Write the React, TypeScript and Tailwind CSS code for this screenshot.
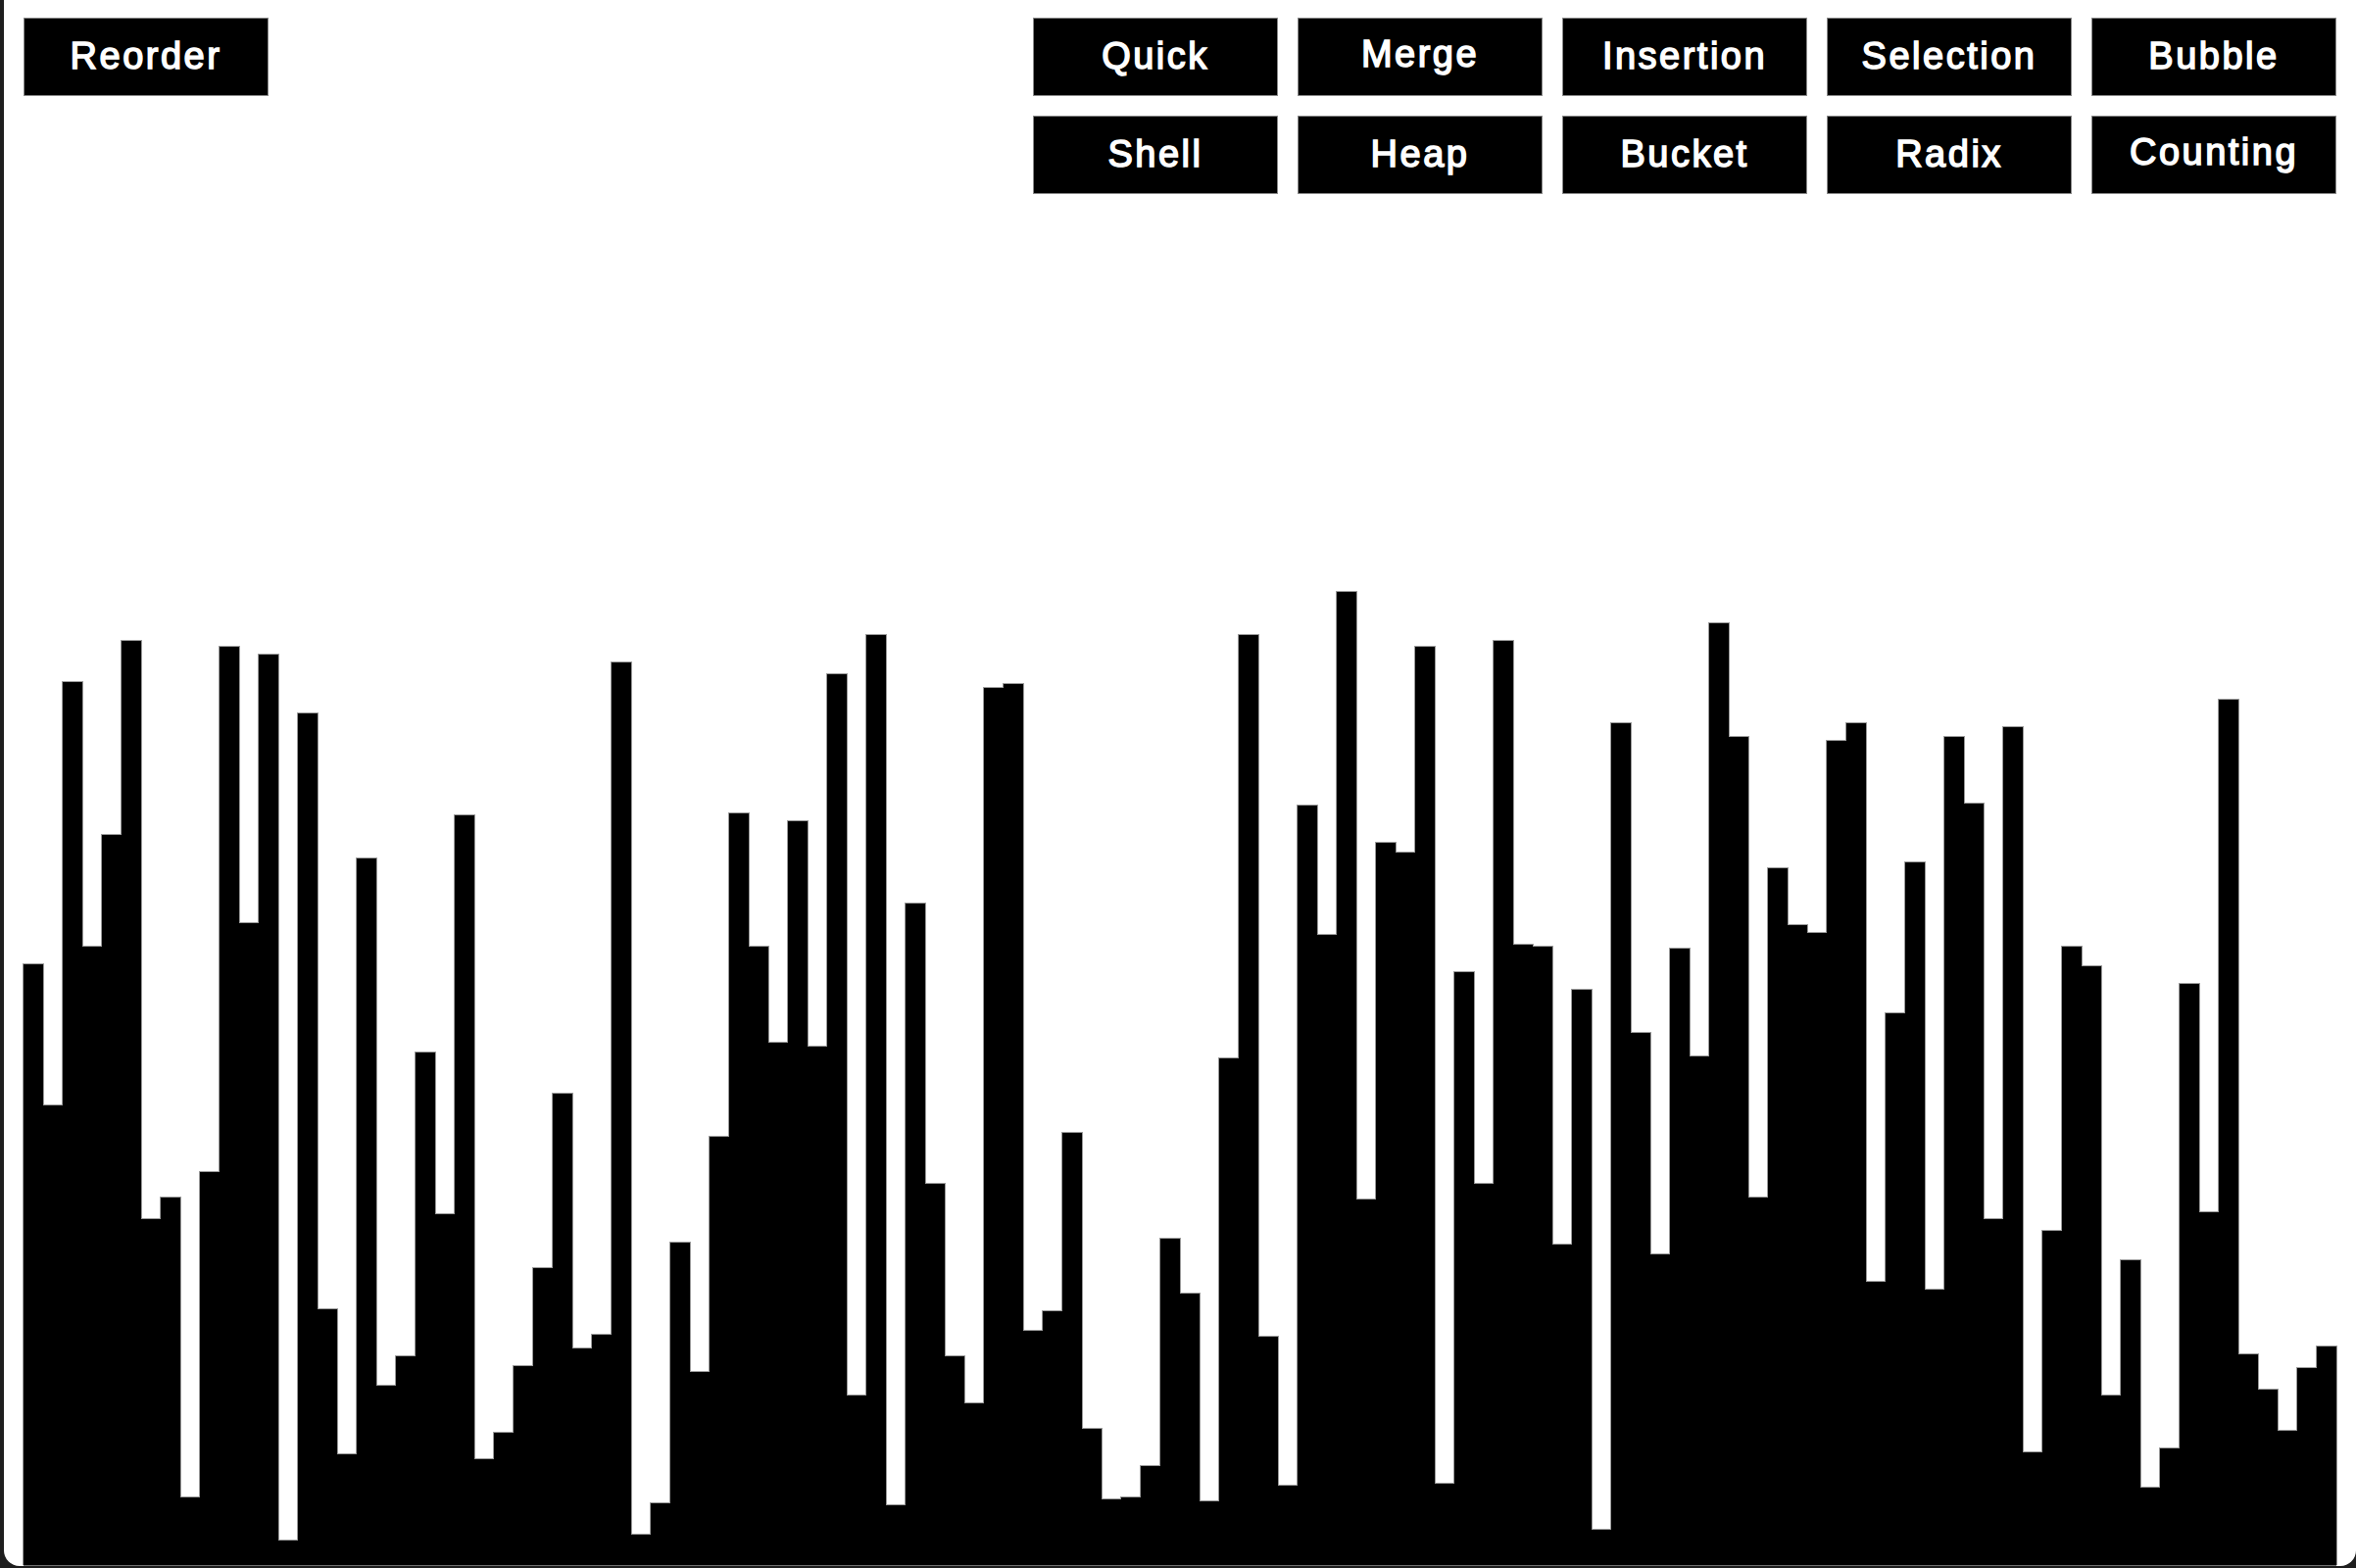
const tops = [
  984, 1128, 696, 966, 852, 654, 1244, 1222, 1528, 1196, 660, 942, 668, 1572, 728, 1336, 1484, 876, 1414, 1384,
  1074, 1239, 832, 1489, 1462, 1394, 1294, 1116, 1376, 1362, 676, 1566, 1534, 1268, 1400, 1160, 830, 966, 1064, 838,
  1068, 688, 1424, 648, 1536, 922, 1208, 1384, 1432, 702, 698, 1358, 1338, 1156, 1458, 1530, 1528, 1496, 1264, 1320,
  1532, 1080, 648, 1364, 1516, 822, 954, 604, 1224, 860, 870, 660, 1514, 992, 1208, 654, 964, 966, 1270, 1010,
  1561, 738, 1054, 1280, 968, 1078, 636, 752, 1222, 886, 944, 952, 756, 738, 1308, 1034, 880, 1316, 752, 820,
  1244, 742, 1482, 1256, 966, 986, 1424, 1286, 1518, 1478, 1004, 1237, 714, 1382, 1418, 1460, 1396, 1374,
];

const rowOne = ["Quick", "Merge", "Insertion", "Selection", "Bubble"];
const rowTwo = ["Shell", "Heap", "Bucket", "Radix", "Counting"];

function SortButton({ label, raised }: { label: string; raised?: boolean }) {
  return (
    <button className="w-[250px] h-[80px] bg-black border border-[#8a8a8a] text-white text-[38px] font-normal tracking-[2.5px] [-webkit-text-stroke:1.5px_white] leading-none flex items-center justify-center font-['Liberation_Sans',Arial,sans-serif]">
      <span className={raised ? "-translate-y-[3px]" : "-translate-y-[1px]"}>{label}</span>
    </button>
  );
}

export default function App() {
  return (
    <div className="w-[2404px] h-[1600px] bg-[#1e1e1e] pl-[4px] pb-[2px] overflow-hidden">
      <div className="h-full bg-white rounded-b-[16px] pt-[18px] pl-[20px] pr-[20px] flex flex-col overflow-hidden">
        <div className="flex justify-between items-start">
          <SortButton label="Reorder" />
          <div className="flex flex-col gap-[20px]">
            <div className="flex gap-[20px]">
              {rowOne.map((l) => (
                <SortButton key={l} label={l} raised={l === "Merge"} />
              ))}
            </div>
            <div className="flex gap-[20px]">
              {rowTwo.map((l) => (
                <SortButton key={l} label={l} raised={l === "Counting"} />
              ))}
            </div>
          </div>
        </div>
        <div className="flex-1 flex items-end border-b border-[#707070]">
          {tops.map((t, i) => (
            <div
              key={i}
              className="relative w-[20px] before:absolute before:-inset-x-px before:-top-px before:bottom-0 before:bg-[#9a9a9a] before:z-0 after:absolute after:inset-0 after:bg-black after:z-10"
              style={{ height: 1597 - t }}
            />
          ))}
        </div>
      </div>
    </div>
  );
}
